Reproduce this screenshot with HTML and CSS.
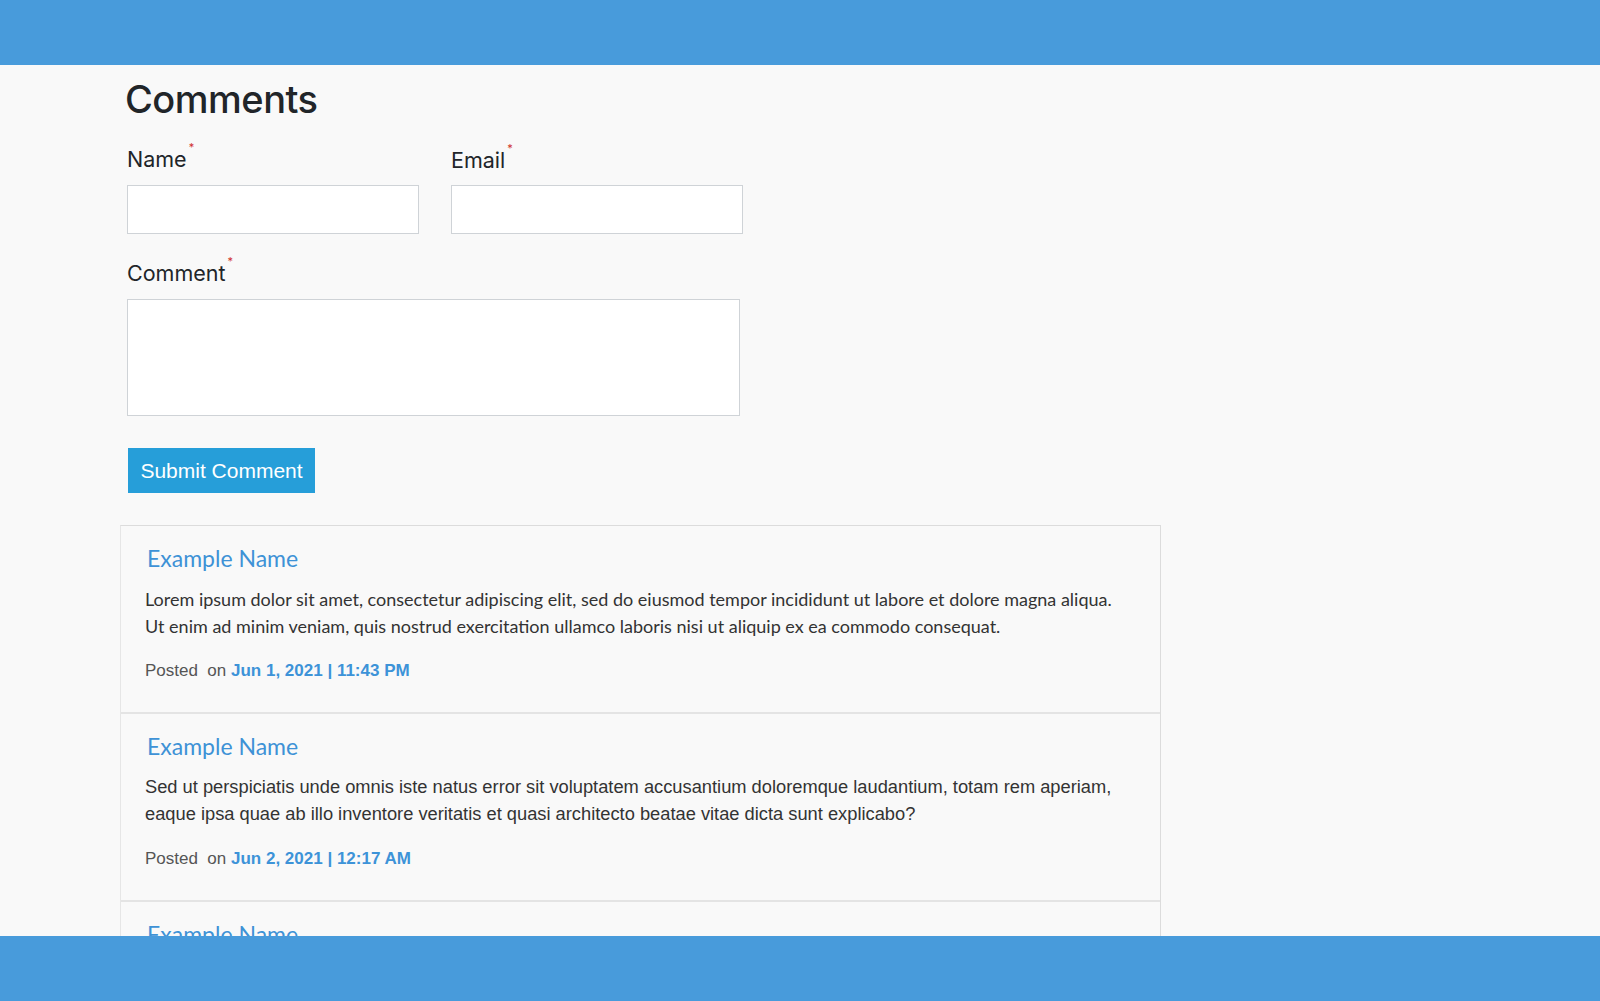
FILE: index.html
```html
<!DOCTYPE html>
<html lang="en">
<head>
    <meta charset="UTF-8">
    <meta name="viewport" content="width=device-width, initial-scale=1.0">
    <title>Comments</title>
    <link rel="stylesheet" href="styles.css">
</head>
<body>
    <header class="top-bar"></header>

    <main class="page">
        <h1>Comments</h1>

        <form class="comment-form">
            <div class="form-row">
                <div class="field">
                    <label for="name">Name<span class="req">*</span></label>
                    <input type="text" id="name">
                </div>
                <div class="field field-email">
                    <label for="email">Email<span class="req">*</span></label>
                    <input type="email" id="email">
                </div>
            </div>
            <div class="field field-comment">
                <label for="comment">Comment<span class="req">*</span></label>
                <textarea id="comment"></textarea>
            </div>
            <button type="button" class="submit">Submit Comment</button>
        </form>

        <div class="comment-list">
            <div class="comment">
                <a class="author" href="#">Example Name</a>
                <p class="body lato">Lorem ipsum dolor sit amet, consectetur adipiscing elit, sed do eiusmod tempor incididunt ut labore et dolore magna aliqua. Ut enim ad minim veniam, quis nostrud exercitation ullamco laboris nisi ut aliquip ex ea commodo consequat.</p>
                <p class="meta">Posted &nbsp;on <strong>Jun 1, 2021 | 11:43 PM</strong></p>
            </div>
            <div class="comment">
                <a class="author" href="#">Example Name</a>
                <p class="body">Sed ut perspiciatis unde omnis iste natus error sit voluptatem accusantium doloremque laudantium, totam rem aperiam, eaque ipsa quae ab illo inventore veritatis et quasi architecto beatae vitae dicta sunt explicabo?</p>
                <p class="meta">Posted &nbsp;on <strong>Jun 2, 2021 | 12:17 AM</strong></p>
            </div>
            <div class="comment">
                <a class="author" href="#">Example Name</a>
                <p class="body">Nemo enim ipsam voluptatem quia voluptas sit aspernatur aut odit aut fugit, sed quia consequuntur magni dolores eos qui ratione voluptatem sequi nesciunt.</p>
                <p class="meta">Posted &nbsp;on <strong>Jun 2, 2021 | 9:05 AM</strong></p>
            </div>
        </div>
    </main>

    <footer class="bottom-bar"></footer>
</body>
</html>
```

FILE: styles.css
```css
body {
    margin: 0;
    background-color: #f9f9f9;
    font-family: Inter, "Liberation Sans", sans-serif;
    color: #212529;
}
.top-bar {
    height: 65px;
    background-color: #489bdb;
}
.bottom-bar {
    position: fixed;
    left: 0;
    right: 0;
    bottom: 0;
    height: 65px;
    background-color: #489bdb;
}
.page {
    width: 1041px;
    margin-left: 120px;
    padding-bottom: 80px;
}
h1 {
    margin: 11px 0 0 5px;
    font-size: 38px;
    font-weight: 500;
    line-height: 46px;
    letter-spacing: -0.5px;
}
.comment-form {
    padding-left: 7px;
}
.form-row {
    display: flex;
    gap: 32px;
    margin-top: 21px;
}
.field label {
    display: block;
    font-size: 21.5px;
    line-height: 33px;
    margin-bottom: 9px;
}
.field-email label {
    margin-top: 1px;
    margin-bottom: 8px;
}
.req {
    color: #d0312d;
    font-size: 11px;
    vertical-align: 16px;
    line-height: 0;
    margin-left: 2px;
}
.field input {
    box-sizing: border-box;
    width: 292px;
    height: 49px;
    border: 1px solid #cfd3d7;
    background: #fff;
}
.field-comment {
    margin-top: 23px;
}
.field textarea {
    display: block;
    box-sizing: border-box;
    width: 613px;
    height: 117px;
    border: 1px solid #cfd3d7;
    background: #fff;
    resize: none;
}
.submit {
    margin: 32px 0 0 1px;
    width: 187px;
    height: 45px;
    border: none;
    background-color: #269ed9;
    color: #fff;
    font-family: "Liberation Sans", Arial, sans-serif;
    font-size: 21px;
    padding: 0;
    cursor: pointer;
}
.comment-list {
    margin-top: 32px;
    border: 1px solid #dcdcdc;
    border-left-color: #e6e6e6;
}
.comment {
    padding: 16px 36px 31px 24px;
    border-bottom: 2px solid #e4e4e4;
}
.author {
    display: block;
    margin-left: 2px;
    font-family: Lato, sans-serif;
    font-size: 23px;
    line-height: 32px;
    color: #3e92d6;
    text-decoration: none;
}
.body {
    margin: 12px 0 0;
    font-family: "Liberation Sans", Arial, sans-serif;
    font-size: 18.3px;
    line-height: 26.5px;
    color: #333;
}
.body.lato {
    font-family: Lato, sans-serif;
    font-size: 18px;
}
.meta {
    margin: 22px 0 0;
    font-family: "Liberation Sans", Arial, sans-serif;
    font-size: 17px;
    line-height: 20px;
    color: #555;
}
.meta strong {
    color: #3d93d8;
}
```
